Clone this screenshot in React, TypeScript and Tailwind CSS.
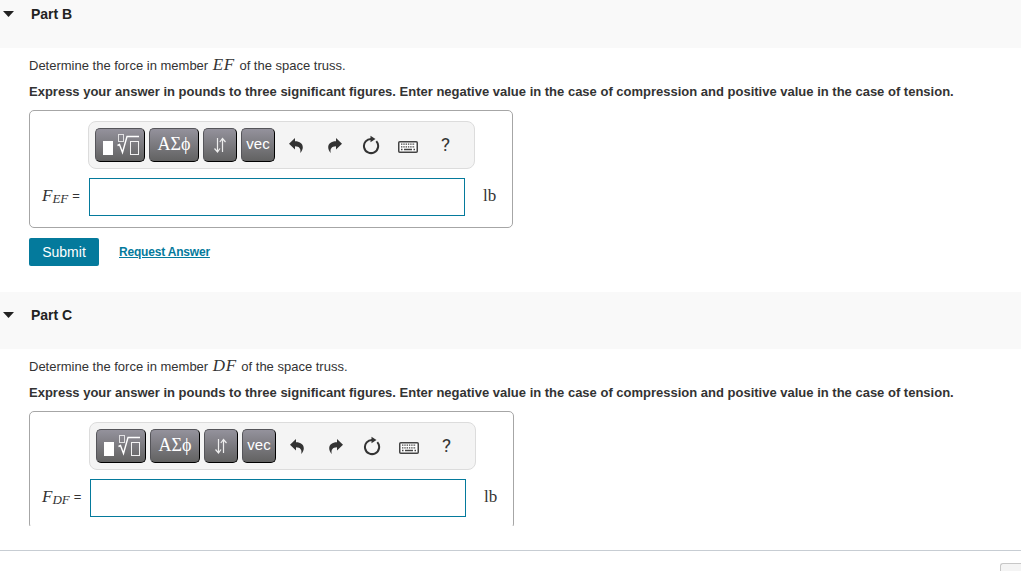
import React from "react";

type PartProps = {
  title: string;
  member: string;
  labelWidth: string;
  showActions?: boolean;
};

const toolButton =
  "flex h-[34px] shrink-0 items-center justify-center rounded-[5px] border border-t-[#55555a] border-l-[#55555a] border-r-black border-b-black bg-linear-to-b from-[#94929c] to-[#626262] text-white";

const UndoIcon = ({ className = "" }: { className?: string }) => (
  <svg className={className} width="14" height="15" viewBox="0 0 14 15" fill="#333">
    <path d="M0 5.8 L6 0 V3.2 C10.8 3.2 13.8 5.6 13.8 9.3 C13.8 11.5 12.8 13.3 11.2 15 C12.2 11 10.5 8.4 6 8.3 V11.5 Z" />
  </svg>
);

const Toolbar = () => (
  <div className="flex h-12 w-[387px] items-center rounded-lg border border-[#dcdcdc] bg-[#f4f4f4] pl-[6px]">
    {/* templates */}
    <button className={`${toolButton} w-[50px]`}>
      <svg width="38" height="24" viewBox="0 0 38 24" fill="none" stroke="#fff">
        <rect x="2" y="8" width="10" height="14" fill="#fff" stroke="none" />
        <rect x="17.5" y="1.5" width="5" height="7" strokeOpacity=".75" />
        <path d="M16.5 12.5 L18.5 11.5 L21.5 19.5 L26 3.5 H38" strokeWidth="1.4" />
        <rect x="29.5" y="8.5" width="8" height="13" strokeOpacity=".9" />
      </svg>
    </button>
    {/* symbols */}
    <button className={`${toolButton} ml-1 w-[50px] pb-[2px] font-['Liberation_Serif',serif] text-[18px]`}>
      ΑΣϕ
    </button>
    {/* arrows */}
    <button className={`${toolButton} ml-1 w-[34px]`}>
      <svg width="14" height="18" viewBox="0 0 14 18" fill="none" stroke="#eee" strokeWidth="1.2">
        <path d="M4.5 2 V16 M1.5 12.5 L4.5 16 L7 12.5 M9.5 16 V2.5 M6.8 6 L9.5 2.5 L12.5 6" />
      </svg>
    </button>
    <button className={`${toolButton} ml-1 w-[34px] pb-px font-['Liberation_Sans',sans-serif] text-[15px]`}>
      vec
    </button>
    <UndoIcon className="ml-[14px]" />
    <UndoIcon className="ml-[25px] -scale-x-100" />
    {/* reset */}
    <svg className="ml-[20px]" width="18" height="20" viewBox="0 0 18 20" fill="none">
      <path d="M14.3 6.2 A7.1 7.1 0 1 1 9.5 3.9" stroke="#333" strokeWidth="2" />
      <path d="M8.5 .8 L13.5 4 L8.5 7.2 Z" fill="#333" />
    </svg>
    {/* keyboard */}
    <svg className="mt-[5px] ml-[18px]" width="20" height="13" viewBox="0 0 20 13" fill="none">
      <rect x=".75" y=".75" width="18.5" height="10.5" rx="1" fill="#fff" stroke="#444" strokeWidth="1.5" />
      <path d="M3 3.2 H17 M3 5.8 H17" stroke="#444" strokeWidth="1.3" strokeDasharray="1.4 .9" />
      <path d="M3 8.5 H4.5 M6 8.5 H14 M15.5 8.5 H17" stroke="#444" strokeWidth="1.5" />
    </svg>
    <span className="ml-[23px] pb-[2px] font-['Roboto',sans-serif] text-[19px] leading-none text-[#333]">?</span>
  </div>
);

const Part = ({ title, member, labelWidth, showActions = false }: PartProps) => (
  <section className="h-[301px] shrink-0">
    {/* heading */}
    <div className="flex h-[57px] items-start bg-[#f9f9f9] pt-[13px] pl-[3px]">
      <svg className="mt-[7px]" width="11" height="6" viewBox="0 0 11 6">
        <path d="M0 0 H11 L5.5 6 Z" fill="#222" />
      </svg>
      <h2 className="ml-[17px] text-[14px] leading-5 font-bold text-[#222]">{title}</h2>
    </div>

    <div className="pl-[29px]">
      <p className="h-[31px] pt-[8px] text-[13px] leading-5 whitespace-nowrap">
        Determine the force in member{" "}
        <i className="mx-px font-['Liberation_Serif',serif] text-[17px] leading-none tracking-[0.6px]">{member}</i>{" "}
        of the space truss.
      </p>
      <p className="mt-[3px] text-[13px] leading-5 font-bold whitespace-nowrap">
        Express your answer in pounds to three significant figures. Enter negative value in the case of
        compression and positive value in the case of tension.
      </p>

      {/* answer box */}
      <div className="mt-[8px] h-[118px] w-fit rounded-[5px] border border-[#a6a6a6] pt-[10px]">
        <div className="flex pr-[37px]">
          <div className={`${labelWidth} shrink-0`} />
          <Toolbar />
        </div>
        <div className="mt-[9px] flex h-[38px] items-center">
          <label
            htmlFor={member}
            className={`${labelWidth} flex shrink-0 items-baseline pb-[3px] pl-[12px] font-['Liberation_Serif',serif] text-[17px] leading-none whitespace-nowrap`}
          >
            <i>F</i>
            <i className="relative top-[2px] text-[13px]">{member}</i>
            <span className="relative -top-px ml-[4px] font-['Liberation_Sans',sans-serif] text-[13px]">=</span>
          </label>
          <input
            id={member}
            className="ml-px h-[38px] w-[376px] shrink-0 border border-[#047a9c] bg-white px-2 outline-none"
            type="text"
          />
          <span className="-mr-5 ml-[18px] w-5 pb-[2px] font-['Liberation_Serif',serif] text-[17px]">lb</span>
        </div>
      </div>

      {/* actions */}
      {showActions && (
        <div className="mt-[10px] flex items-center">
          <button className="h-7 w-[70px] rounded-[2px] bg-[#047a9c] text-[14px] text-white">Submit</button>
          <a href="#" className="ml-5 text-[12px] font-bold tracking-[-0.19px] text-[#047a9c] underline">
            Request Answer
          </a>
        </div>
      )}
    </div>
  </section>
);

const App = () => {
  return (
    <div className="flex h-screen w-full flex-col overflow-hidden bg-white font-['Liberation_Sans',Arial,sans-serif] text-[#333]">
      <main className="h-[526px] shrink-0 overflow-hidden">
        <div className="-mt-[9px]">
          <Part title="Part B" member="EF" labelWidth="w-[58px]" showActions />
          <Part title="Part C" member="DF" labelWidth="w-[59px]" />
        </div>
      </main>
      {/* footer */}
      <footer className="mt-6 flex shrink-0 justify-end border-t border-[#c7cdd3] pt-3">
        <div className="h-8 w-[21px] rounded-tl-[3px] border-t border-l border-[#c7c7c7] bg-[#f4f4f4]" />
      </footer>
    </div>
  );
};

export default App;
